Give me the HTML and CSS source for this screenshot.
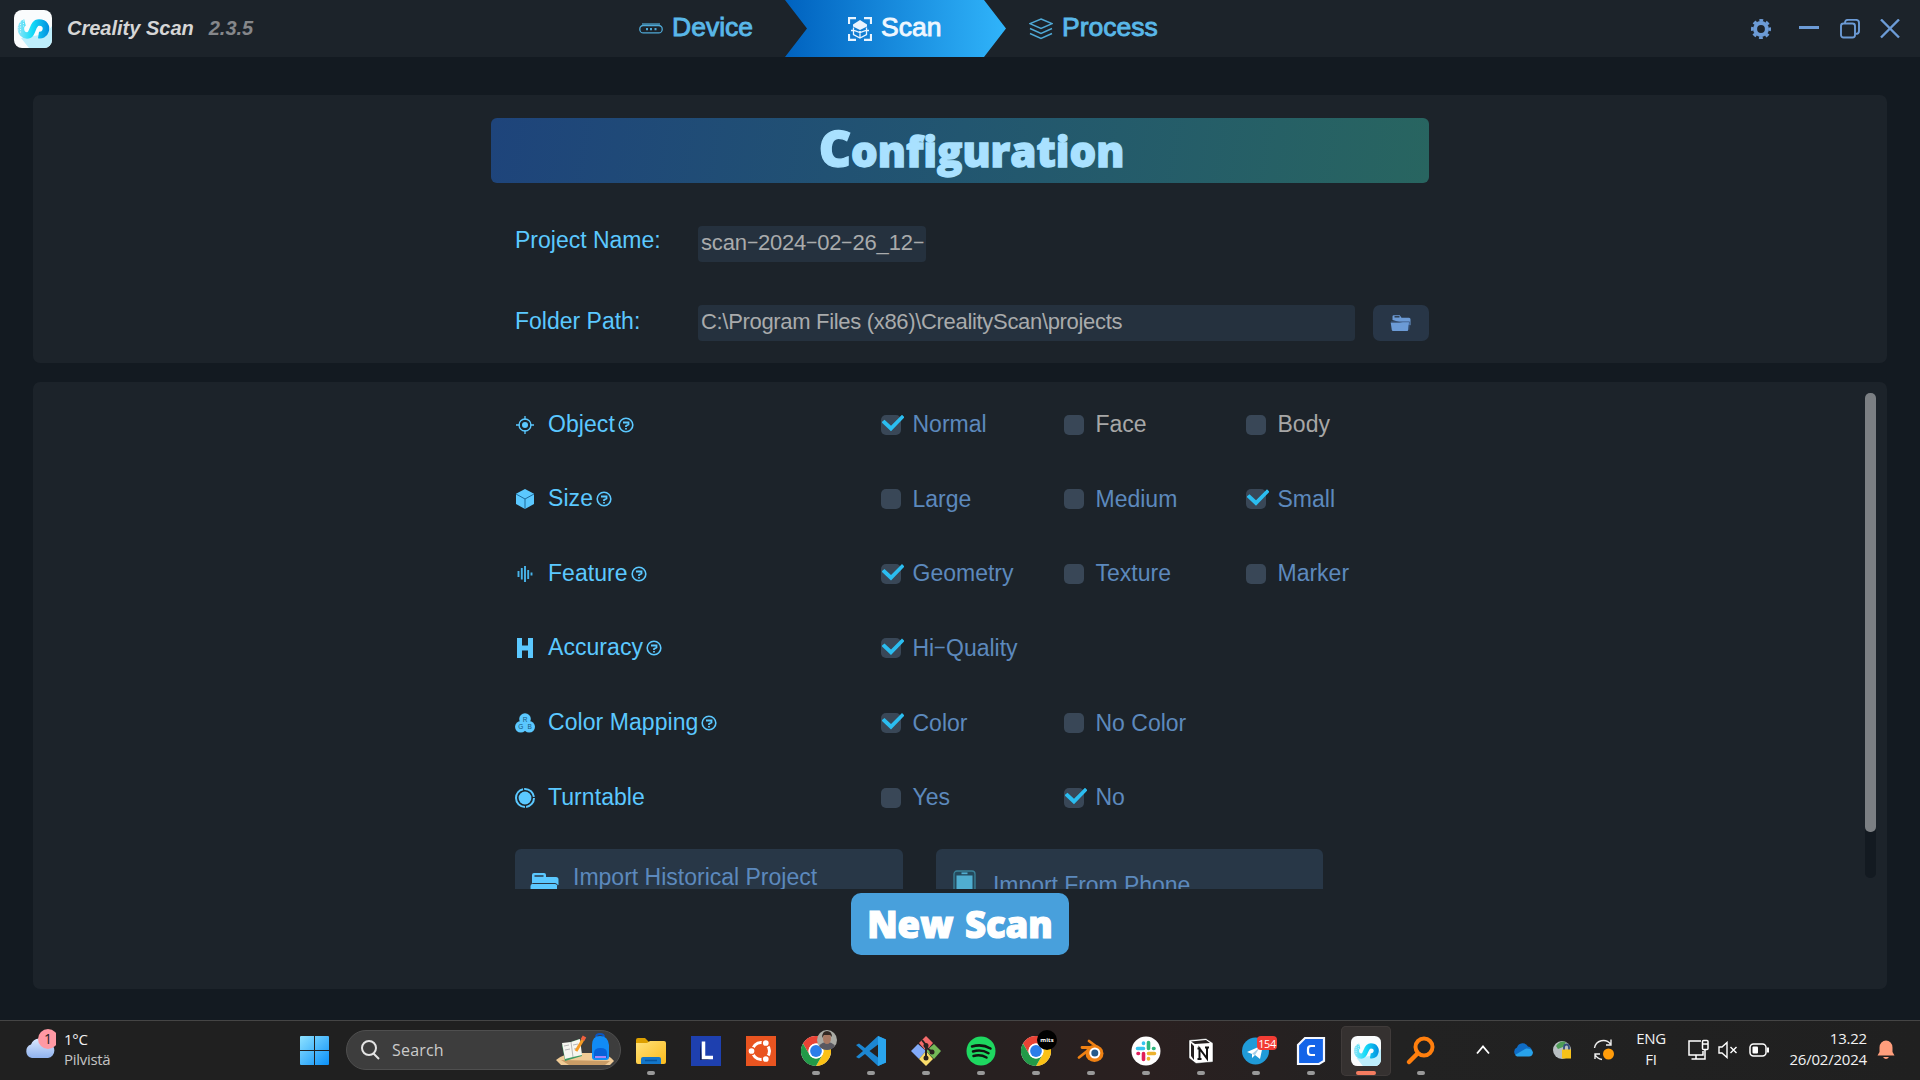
FILE: index.html
```
<!DOCTYPE html>
<html lang="en">
<head>
<meta charset="utf-8">
<title>Creality Scan</title>
<link rel="stylesheet" href="styles.css">
</head>
<body>
<svg class="defs" width="0" height="0">
  <defs>
    <linearGradient id="cr" gradientUnits="userSpaceOnUse" x1="4" y1="18" x2="35" y2="18"><stop offset="0" stop-color="#8fe4f7"/><stop offset=".45" stop-color="#16dcf8"/><stop offset="1" stop-color="#0090e0"/></linearGradient>
    <linearGradient id="win" x1="0" y1="0" x2="1" y2="1"><stop offset="0" stop-color="#8ee2ff"/><stop offset="1" stop-color="#0a90f8"/></linearGradient>
    <linearGradient id="fold" x1="0" y1="0" x2="1" y2="1"><stop offset="0" stop-color="#ffe27a"/><stop offset="1" stop-color="#fbbb1c"/></linearGradient>
    <linearGradient id="cloud" x1="0" y1="0" x2="0" y2="1"><stop offset="0" stop-color="#dbe9ff"/><stop offset="1" stop-color="#8fb2ee"/></linearGradient>
    <symbol id="logo" viewBox="0 0 38 38">
      <rect width="38" height="38" rx="8" fill="#fafcfd"/>
      <path d="M7 28 15 38H30a8 8 0 0 0 8-8V16L32 24z" fill="#bdeefc"/>
      <path d="M11 12.500C5 14 5.500 25.500 13 25.500C20 25.500 17.500 12.500 25 12.500C31 12.500 33 17 31.500 21C30.500 24.500 27.500 25.500 24.500 25" fill="none" stroke="url(#cr)" stroke-width="6.500"/>
      <path d="M4 12v10M6.500 9v14M9.500 8v9M12.500 9v5" stroke="#fafcfd" stroke-width=".8" stroke-dasharray="1 1.500"/>
    </symbol>
    <symbol id="help" viewBox="0 0 16 16"><circle cx="8" cy="8" r="6.800" fill="none" stroke="#5bc8ff" stroke-width="1.600"/><path d="M5 5.500h5.500v2L8 9v1M8 11v1.500" fill="none" stroke="#5bc8ff" stroke-width="1.800"/></symbol>
    <symbol id="chrome" viewBox="0 0 30 30">
      <circle cx="15" cy="15" r="15" fill="#fff"/>
      <path d="M2 7.500A15 15 0 0 1 28 7.500H15a7.500 7.500 0 0 0-6.500 11.200z" fill="#ea4335"/>
      <path d="M28 7.500A15 15 0 0 1 15 30l6.500-11.300A7.500 7.500 0 0 0 15 7.500z" fill="#fbc116"/>
      <path d="M2 7.500A15 15 0 0 0 15 30l6.500-11.300a7.500 7.500 0 0 1-13 0z" fill="#229a48"/>
      <circle cx="15" cy="15" r="7.500" fill="#fff"/><circle cx="15" cy="15" r="5.900" fill="#2b7de9"/>
    </symbol>
  </defs>
</svg>

<header class="titlebar">
  <div class="brand">
    <svg width="38" height="38"><use href="#logo"/></svg>
    <span class="brand-name">Creality Scan</span>
    <span class="brand-version">2.3.5</span>
  </div>
  <nav class="steps">
    <a class="step device">
      <svg width="24" height="24" viewBox="0 0 24 24" fill="none" stroke="#4fa9d6" stroke-width="1.300"><rect x=".8" y="8.500" width="22.400" height="7.400" rx="3.500"/><path d="M3 7h18" stroke-width="1.200"/><path d="M7 12.200h2M11 12.200h2M15.500 12.200h2" stroke-width="2.200"/></svg>
      <span>Device</span>
    </a>
    <a class="step scan">
      <svg width="24" height="24" viewBox="0 0 24 24" fill="none" stroke="#e8f4ff" stroke-width="2.200"><path d="M1 7V1.100h7M16 1.100h7V7M23 17v5.900h-7M8 22.900H1V17"/><path d="M12 3 19 7.500v2L12 13 5 9.500v-2z" fill="#e8f4ff" stroke="none"/><path d="M3 13.500h3l6 2 6-2h3M5.500 10.500v7L12 21l6.500-3.500v-7M12 14v7" stroke-width="1.300"/></svg>
      <span>Scan</span>
    </a>
    <a class="step process">
      <svg width="24" height="24" viewBox="0 0 24 24" fill="none" stroke="#4fa9d6" stroke-width="1.400"><path d="M12 2 23 6.700 12 11.500 1 6.700zM1 11.500l11 5 11-5M1 16.500l11 5 11-5"/></svg>
      <span>Process</span>
    </a>
  </nav>
  <div class="controls">
    <svg width="20" height="20" viewBox="0 0 20 20"><circle cx="10" cy="10" r="5.900" fill="none" stroke="#6c9bd6" stroke-width="4"/><circle cx="10" cy="10" r="8.700" fill="none" stroke="#6c9bd6" stroke-width="2.600" stroke-dasharray="3.800 3.033" stroke-dashoffset="1.900"/></svg>
    <svg width="20" height="20" viewBox="0 0 20 20"><path d="M0 8.500h20" stroke="#6c9bd6" stroke-width="3"/></svg>
    <svg width="20" height="20" viewBox="0 0 20 20" fill="none" stroke="#6c9bd6" stroke-width="1.900"><rect x="1" y="4.500" width="14" height="14" rx="2.500"/><path d="M5 4C5 1.800 6 .9 8 .9h8c2 0 3 1 3 3v8c0 2-1 3-3.500 3"/></svg>
    <svg width="20" height="20" viewBox="0 0 20 20"><path d="M1 .5l18 18M19 .5 1 18.500" stroke="#6c9bd6" stroke-width="2.400"/></svg>
  </div>
</header>

<main class="workspace">
  <section class="panel project">
    <div class="project-form">
      <h1 class="banner"><span class="initial">C</span>onfiguration</h1>
      <div class="field name-field">
        <label>Project Name:</label>
        <div class="input short">scan<i>-</i>2024<i>-</i>02<i>-</i>26_12<i>-</i></div>
      </div>
      <div class="field path-field">
        <label>Folder Path:</label>
        <div class="input path">C:\Program Files (x86)\CrealityScan\projects</div>
        <button class="browse"><svg width="22" height="18" viewBox="0 0 22 18"><path d="M2.500 6V2.500q0-1.300 1.300-1.300h6l1.700 2.500h7.500q1.500 0 1.500 1.500v6" fill="#6c9bd6"/><path d="M4.500 2.800h5" stroke="#283647" stroke-width="1.400"/><path d="M.7 8.500H19L18.200 16q-.1 1-1 1H3q-1 0-1.200-1z" fill="#6c9bd6"/><path d="M1 7.800h18.500l-.6 8" stroke="#3b5983" fill="none" stroke-width=".8"/></svg></button>
      </div>
    </div>
  </section>

  <section class="panel options">
    <div class="scroll">
      <div class="option-form">
        <div class="row">
          <div class="label"><svg width="20" height="20" viewBox="0 0 20 20"><circle cx="10" cy="10" r="6" fill="none" stroke="#5bc8ff" stroke-width="1.300"/><circle cx="10" cy="10" r="3" fill="#5bc8ff"/><path d="M10 1v4M10 15v4M1 10h4M15 10h4" stroke="#5bc8ff" stroke-width="1.300"/></svg><span>Object</span><svg class="help"><use href="#help"/></svg></div>
          <div class="choice on"><b></b>Normal</div><div class="choice gray"><b></b>Face</div><div class="choice gray"><b></b>Body</div>
        </div>
        <div class="row">
          <div class="label"><svg width="20" height="20" viewBox="0 0 20 20"><path d="M10 0 19 4.800V15L10 20 1 15V4.800z" fill="#5bc8ff"/><path d="M1 5l9 5 9-5M10 10v10" stroke="#1c6a9c" fill="none"/></svg><span>Size</span><svg class="help"><use href="#help"/></svg></div>
          <div class="choice"><b></b>Large</div><div class="choice"><b></b>Medium</div><div class="choice on"><b></b>Small</div>
        </div>
        <div class="row">
          <div class="label"><svg width="20" height="20" viewBox="0 0 20 20"><path d="M3.500 7v6M6.800 4v11.500M10 2v16M13.200 6v9M16.500 8.500v3" stroke="#48b4ea" stroke-width="1.900"/></svg><span>Feature</span><svg class="help"><use href="#help"/></svg></div>
          <div class="choice on"><b></b>Geometry</div><div class="choice"><b></b>Texture</div><div class="choice"><b></b>Marker</div>
        </div>
        <div class="row">
          <div class="label"><svg width="20" height="20" viewBox="0 0 20 20"><path d="M4.500 0v20M15.500 0v20M4 10h12" stroke="#5bc8ff" stroke-width="5"/></svg><span>Accuracy</span><svg class="help"><use href="#help"/></svg></div>
          <div class="choice on"><b></b><span>Hi<i>-</i>Quality</span></div>
        </div>
        <div class="row">
          <div class="label"><svg width="20" height="20" viewBox="0 0 20 20"><g fill="#5bc8ff"><circle cx="10" cy="6" r="5.800"/><circle cx="5.800" cy="13.800" r="5.800"/><circle cx="14.200" cy="13.800" r="5.800"/></g><g class="rgb"><text x="7.800" y="8.500">R</text><text x="3.200" y="16">G</text><text x="12.400" y="16">B</text></g></svg><span>Color Mapping</span><svg class="help"><use href="#help"/></svg></div>
          <div class="choice on"><b></b>Color</div><div class="choice"><b></b>No Color</div>
        </div>
        <div class="row">
          <div class="label"><svg width="20" height="20" viewBox="0 0 20 20"><circle cx="10" cy="10" r="6.400" fill="#5bc8ff"/><circle cx="10" cy="10" r="9" fill="none" stroke="#5bc8ff" stroke-width="2" stroke-dasharray="12.900 1.200 26 1.200 13.800 1.400"/></svg><span>Turntable</span></div>
          <div class="choice"><b></b>Yes</div><div class="choice on"><b></b>No</div>
        </div>
        <div class="imports">
          <button class="import history"><svg width="30" height="28" viewBox="0 0 30 28"><path d="M2 10V2q0-2 2-2h10q2 0 2 2v2h10q2.500 0 2.500 2.500V12H2z" fill="#5bc8ff"/><path d="M4.500 3h9" stroke="#283747" stroke-width="1.500"/><path d="M0 13q0-2.500 2.500-2.500H25q2 0 2.500 2V26H0z" fill="#5bc8ff" stroke="#283747"/></svg><span>Import Historical Project</span></button>
          <button class="import phone"><svg width="23" height="38" viewBox="0 0 23 38"><rect x="1" y="1" width="21" height="36" rx="3" fill="#24495c" stroke="#3a8299" stroke-width="1.300"/><path d="M8.500 3.300h6" stroke="#50aed0" stroke-width="1.800"/><rect x="3.500" y="5.500" width="16" height="26" fill="#50aed0"/></svg><span>Import From Phone</span></button>
        </div>
      </div>
      <div class="scrollbar"><div class="thumb"></div></div>
    </div>
    <button class="new-scan">New Scan</button>
  </section>
</main>

<footer class="taskbar">
  <div class="weather">
    <svg width="32" height="34" viewBox="0 0 32 34"><path d="M8 32a7 7 0 0 1-1-13.500A9.500 9.500 0 0 1 24 17a7.600 7.600 0 0 1 0 15z" fill="url(#cloud)"/><circle cx="24" cy="13" r="10" fill="#ff99a4"/><text x="24" y="18" text-anchor="middle" class="badge-text">1</text></svg>
    <div class="weather-text"><span>1°C</span><span>Pilvistä</span></div>
  </div>
  <svg class="start" width="29" height="29" viewBox="0 0 29 29" fill="url(#win)"><path d="M1 0h13v14H0V1q0-1 1-1zM15 0h13q1 0 1 1v13H15zM0 15h14v14H1q-1 0-1-1zM15 15h14v13q0 1-1 1H15z"/></svg>
  <div class="search">
    <svg width="19" height="20" viewBox="0 0 19 20" fill="none" stroke="#e4e4e4" stroke-width="2"><circle cx="8" cy="8" r="7"/><path d="M12.500 13.500 18 19"/></svg>
    <span>Search</span>
    <svg class="art" width="58" height="34" viewBox="0 0 58 34"><path d="M0 27q8-7 22-7h20q9 0 16 8l-4 4H5z" fill="#f0cb96"/><path d="m5 27 8 5h36l5-4" fill="#c99c66"/><path d="M6 12 23 6l3 17-17 5z" fill="#3f9a63"/><path d="m6 10 9-1 9-3 2 16-9 2-8 2z" fill="#f6f6f0"/><path d="M15 9l2 15M8 13l5-1M9 17l5-1M17 12l5-1M18 16l5-1" stroke="#b8b8b8"/><path d="m20 18 8-13" stroke="#f59b25" stroke-width="3"/><path d="m26.500 7 2-3.500" stroke="#f0603f" stroke-width="4"/><path d="M40 4q0-3 4-3t4 3" fill="none" stroke="#0c55c0" stroke-width="2"/><path d="M36 12q0-9 8-9t9 9v12q0 3-3 3H39q-3 0-3-3z" fill="#118bf5"/><path d="M38 20q0-5 6.500-5t6.500 5v5H38z" fill="#0761d8"/><path d="M39 24h11" stroke="#a884f5" stroke-width="2"/></svg>
  </div>
  <div class="apps">
    <div class="app"><svg viewBox="0 0 30 30"><path d="M0 4q0-2 2-2h7l4 4v3H0z" fill="#dda000"/><path d="M0 7h11l3-2h14q2 0 2 2v19q0 2-2 2H2q-2 0-2-2z" fill="url(#fold)"/><path d="M5 28v-5q0-2 2-2h16q2 0 2 2v5z" fill="#1376c9"/><path d="M9 24.500h12" stroke="#07549c" stroke-width="1.500"/></svg></div>
    <div class="app idle"><svg viewBox="0 0 30 30"><path d="M0 0h30v30H0z" fill="#1e40af"/><path d="M9 6v18h10l-8-3z" fill="#0a1c5a"/><path d="M12.500 5.500v16H22" fill="none" stroke="#fff" stroke-width="3.500"/></svg></div>
    <div class="app idle"><svg viewBox="0 0 30 30"><path d="M0 0h30v30H0z" fill="#e95420"/><circle cx="15" cy="15" r="8.500" fill="none" stroke="#fff" stroke-width="3"/><g fill="#fff" stroke="#e95420" stroke-width="1.500"><circle cx="5.500" cy="15" r="3.600"/><circle cx="19.800" cy="7" r="3.600"/><circle cx="19.800" cy="23" r="3.600"/></g></svg></div>
    <div class="app"><svg viewBox="0 0 30 30"><use href="#chrome" width="30" height="30"/></svg><svg class="avatar" viewBox="0 0 20 20"><circle cx="10" cy="10" r="10" fill="#a9aaa4"/><path d="M2 16q3-4 8-4t8 4q-3 4-8 4t-8-4z" fill="#595860"/><ellipse cx="10" cy="8.500" rx="4" ry="5.500" fill="#a87862"/><path d="M5 8q0-7 5-7t5 6l-2-2H7z" fill="#332823"/></svg></div>
    <div class="app"><svg viewBox="0 0 30 30"><path d="M22 0 30 3.500v23L22 30 9 18l-6 4.500L0 21l7-6L0 9l3-1.500L9 12z" fill="#1c86d1"/><path d="M22 0 30 3.500v23L22 30z" fill="#2aa5ee"/><path d="M22 8.500v13L13.500 15z" fill="#252120"/></svg></div>
    <div class="app"><svg viewBox="0 0 30 30"><path d="m15 0 7 7-7 8-7-8z" fill="#f56b6b"/><path d="m7 8 8 7-7 8-8-8z" fill="#82aaf8"/><path d="m23 8 7 7-7 8-8-8z" fill="#74b957"/><path d="m15 15 7 8-7 7-7-7z" fill="#f9dc6b"/><path d="M11 4l4 5v14M15 11l6 5" stroke="#2a211f" stroke-width="2" fill="none"/><g fill="#2a211f"><circle cx="15" cy="9.500" r="2.500"/><circle cx="21" cy="16" r="2.500"/><circle cx="15" cy="22" r="2.500"/></g></svg></div>
    <div class="app"><svg viewBox="0 0 30 30"><circle cx="15" cy="15" r="14.500" fill="#1ed760"/><path d="M6 10.500q10-3 18.500 2M7 15.500q8.500-2.500 15.500 1.700M7.500 20q7-2 13 1.500" stroke="#101410" fill="none" stroke-linecap="round" stroke-width="2.500"/></svg></div>
    <div class="app"><svg viewBox="0 0 30 30"><use href="#chrome" width="30" height="30"/></svg><svg class="avatar" viewBox="0 0 20 20"><circle cx="10" cy="10" r="10"/><text x="10" y="12" text-anchor="middle" class="mits">mits</text></svg></div>
    <div class="app"><svg viewBox="0 0 30 30"><path d="M6 11.500h10M3 21.500 15 12M13 5l12 9" stroke="#ef8113" stroke-width="2.800" fill="none" stroke-linecap="round"/><ellipse cx="18.500" cy="17.500" rx="9" ry="8.500" fill="#ef8113"/><circle cx="18.800" cy="17" r="5.500" fill="#fff"/><circle cx="18.800" cy="17" r="3.500" fill="#255a8c"/></svg></div>
    <div class="app"><svg viewBox="0 0 30 30"><circle cx="15" cy="15" r="14.500" fill="#fff"/><g stroke-width="3.600" stroke-linecap="round"><path d="M12.500 7v.5M6.500 12.500h6" stroke="#36c5f0"/><path d="M17.500 6.500v6M23 12.500h-.5" stroke="#2eb67d"/><path d="M17.500 17.500h6M17.500 23v-.5" stroke="#ecb22e"/><path d="M12.500 17.500v6M7 17.500h.5" stroke="#e01e5a"/></g></svg></div>
    <div class="app"><svg viewBox="0 0 30 30"><path d="m3 4 17-1.500L27 7v19l-17 1.500L3 22z" fill="#fff" stroke="#111" stroke-width=".5"/><path d="M5 5.500 20 4l4 3-15 1zM5 7l3 3v14l-3-4z" fill="#242020"/><path d="M9.500 10 25 9v15.500L9.500 26z" fill="#fff"/><path d="M13.500 23V12.500l7.500 10V11M11.500 12.500h3M19 11.500h4M11.500 23h4" stroke="#111" stroke-width="2" fill="none"/></svg></div>
    <div class="app"><svg viewBox="0 0 30 30"><circle cx="14.500" cy="15" r="13.500" fill="#209bd8"/><path d="m6 16 16-7-3 14-5-4-3 3v-4z" fill="#fff"/><path d="m11 18 8-7-5 8" fill="#a6cfe7"/><rect x="16" y="0" width="20" height="14" rx="4" fill="#f23c34"/><text x="26" y="11.500" text-anchor="middle" class="count">154</text></svg></div>
    <div class="app"><svg viewBox="0 0 30 30"><path d="M9 2h19v23l-5 3H2V9z" fill="#1464e8" stroke="#f4f7ff" stroke-width="2.200"/><path d="M19 10h-4q-3 0-3 3v3q0 3 3 3h4" stroke="#fff" stroke-width="2.200" fill="none"/></svg></div>
    <div class="app active"><svg viewBox="0 0 38 38"><use href="#logo" width="38" height="38"/></svg></div>
    <div class="app"><svg viewBox="0 0 30 30"><circle cx="18" cy="11" r="8.500" fill="none" stroke="#ff7f0e" stroke-width="4"/><path d="M11.500 17.500 3 26" stroke="#ff7f0e" stroke-width="4.500" stroke-linecap="round"/></svg></div>
  </div>
  <div class="tray">
    <svg class="chev" width="14" height="10" viewBox="0 0 14 10"><path d="m1 8.500 6-7 6 7" fill="none" stroke="#fff" stroke-width="1.800"/></svg>
    <svg class="cloud" width="20" height="14" viewBox="0 0 20 14"><path d="M4.500 13a4.500 4.500 0 0 1-.5-8.500 6 6 0 0 1 11-1A5 5 0 0 1 16 13z" fill="#0f6cc5"/><path d="M2 12 13 5.500q6-.5 7 4-.5 4-4 4H4z" fill="#28a2ea"/></svg>
    <svg class="lock" width="20" height="20" viewBox="0 0 20 20"><circle cx="9" cy="10" r="9" fill="#b8bfc2"/><path d="M3 6q4-6 10-4l-3 5-5 2z" fill="#4d9c56"/><path d="M11 10V7.500q0-3 2.500-3t2.500 3V10" fill="none" stroke="#334d7a" stroke-width="1.800"/><rect x="9" y="9.500" width="9" height="9" fill="#f7c21a"/></svg>
    <svg class="sync" width="22" height="22" viewBox="0 0 22 22"><path d="M1.500 9a9 9 0 0 1 16-4M18 .5V6h-5M2 20v-5h5M2 15.500q2 4 7 5" fill="none" stroke="#eee" stroke-width="1.400"/><circle cx="15.500" cy="15" r="5.500" fill="#ff9c0a"/></svg>
    <div class="lang"><span>ENG</span><span>FI</span></div>
    <svg class="net" width="21" height="22" viewBox="0 0 21 22" fill="none" stroke="#fff" stroke-width="1.500"><path d="M13 2H1v14h14v-4M8 16v4M3.500 20H17v-9"/><rect x="14.500" y="1.500" width="5.500" height="9" rx="1"/><path d="M15 5h5"/></svg>
    <svg class="vol" width="20" height="18" viewBox="0 0 20 18" fill="none" stroke="#fff" stroke-width="1.400"><path d="M1 6h3l5-4.500v15L4 12H1zM12.500 6l6 6M18.500 6l-6 6"/></svg>
    <svg class="batt" width="21" height="14" viewBox="0 0 21 14"><rect x="1" y="1" width="16" height="12" rx="3.500" fill="none" stroke="#fff" stroke-width="1.500"/><rect x="3.500" y="3.500" width="5.500" height="7" rx="1" fill="#fff"/><path d="M19 4.500v5" stroke="#fff" stroke-width="2"/></svg>
    <div class="clock"><span>13.22</span><span>26/02/2024</span></div>
    <svg class="bell" width="18" height="20" viewBox="0 0 18 20" fill="#ff9e7c"><path d="M2.500 7.500a6.500 7 0 0 1 13 0V12l2 3.500H.5l2-3.500zM6 17h6q-3 4-6 0z"/></svg>
  </div>
</footer>
</body>
</html>
```

FILE: styles.css
```
* { box-sizing: border-box; }
body {
  margin: 0;
  width: 1920px;
  height: 1080px;
  overflow: hidden;
  display: flex;
  flex-direction: column;
  background: #131a21;
  font-family: "Liberation Sans", Arial, sans-serif;
}
svg { display: block; flex: none; }
.defs { position: absolute; }
button { border: 0; padding: 0; font: inherit; }

/* title bar */
.titlebar { display: flex; height: 57px; background: #1c232a; }
.brand { display: flex; align-items: center; width: 639px; padding-left: 14px; font: italic bold 20px "Liberation Sans", Arial, sans-serif; }
.brand-name { margin-left: 15px; color: #d6d6d6; }
.brand-version { margin-left: 15px; color: #85878a; }
.steps { display: flex; flex: 1; }
.step { display: flex; align-items: center; gap: 9px; font-size: 26.500px; color: #59b7e8; -webkit-text-stroke: .9px currentColor; }
.step span { margin-top: -2px; }
.device { width: 146px; }
.scan { width: 221px; padding-left: 63px; color: #eef7ff; background: linear-gradient(90deg, #0062bf, #1a8fe0 55%, #30b4fa); clip-path: polygon(0 0, 199px 0, 100% 50%, 199px 100%, 0 100%, 22px 50%); }
.process { padding-left: 23px; }
.controls { display: grid; grid-template-columns: 48px 41px 40px 20px; align-items: center; padding-right: 20px; }
.controls svg:first-child { margin-top: 1px; }

/* panels */
.workspace { height: 963px; padding: 38px 33px 31px; display: flex; flex-direction: column; gap: 19px; }
.panel { background: #1c232a; border-radius: 7px; }
.project { height: 268px; padding-top: 23px; }
.project-form { width: 938px; margin-left: 458px; }
.banner {
  display: flex; align-items: baseline; justify-content: center;
  height: 65px; margin: 0; padding-left: 23px; border-radius: 6px;
  background: linear-gradient(100deg, #1e447b, #225670 50%, #286560);
  color: #a9e1ff; font: 800 42px/60px "Open Sans", "Noto Sans", sans-serif;
  -webkit-text-stroke: 1.300px currentColor;
}
.initial { font-size: 50px; }
.field { display: flex; align-items: center; padding-left: 24px; font-size: 23px; color: #5bc8ff; }
.field label { width: 183px; }
.name-field { margin-top: 43px; }
.name-field label { margin-top: -7px; }
.path-field { margin-top: 43px; }
.path-field label { margin-top: -3px; }
.input { height: 36px; line-height: 34px; padding-left: 3px; border-radius: 4px; background: #25313e; color: #a9abac; font-size: 22px; white-space: nowrap; }
.short { width: 228px; letter-spacing: -.17px; }
.path { width: 657px; line-height: 33px; letter-spacing: -.320px; }
i { display: inline-block; font-style: normal; margin: 0 .09em; transform: translateY(-1px) scale(1.75, .8); }
.browse { display: flex; align-items: center; justify-content: center; width: 56px; height: 36px; margin-left: 18px; border-radius: 7px; background: #283647; }

.options { height: 607px; }
.scroll { display: flex; justify-content: space-between; height: 507px; overflow: hidden; }
.option-form { width: 910px; padding-top: 5.400px; margin-left: 482px; }
.row { display: grid; grid-template-columns: 366px 183px 182px 182px; align-items: center; height: 74.600px; font-size: 23px; color: #5c89bd; }
.label { display: flex; align-items: center; color: #5bc8ff; }
.label span { margin-left: 13px; margin-top: -1px; letter-spacing: .06px; }
.help { width: 16px; height: 16px; margin-left: 3px; }
.rgb { font-size: 6.500px; fill: #17577c; }
.choice { display: flex; align-items: center; gap: 11.500px; line-height: 26px; white-space: nowrap; height: 22px; padding-bottom: 1px; }
.choice b { width: 20px; height: 20px; margin-top: 1px; border-radius: 5px; background: #394757; }
.on b::after { content: ""; display: block; width: 23px; height: 18px; background: #2bbdf0; clip-path: polygon(1px 7px, 3.500px 5px, 10px 11px, 21px 0, 23.500px 2.500px, 10px 16.500px, 1px 8px); }
.choice.gray { color: #a7a7a7; }
.imports { display: flex; gap: 33px; margin-top: 14px; }
.import { display: flex; align-items: flex-start; width: 388px; height: 70px; border-radius: 6px; background: #283747; color: #5c89bd; font-size: 23px; white-space: nowrap; }
.history { padding: 24px 0 0 15px; }
.history span { margin: -9px 0 0 13px; }
.phone { width: 387px; padding: 21px 0 0 17px; }
.phone span { margin: 2px 0 0 17px; letter-spacing: -.05px; }
.scrollbar { width: 11px; height: 485px; margin: 11px 11px 0 0; border-radius: 5px; background: #131a21; }
.thumb { height: 439px; border-radius: 5px; background: #7b7f83; }
.new-scan { display: block; width: 218px; height: 62px; margin: 4px auto 0; border-radius: 10px; background: #48a0dc; color: #fff; font: 800 36.500px/62px "Open Sans", "Noto Sans", sans-serif; word-spacing: 2px; -webkit-text-stroke: 1.200px currentColor; }

/* taskbar */
.taskbar { display: flex; align-items: center; height: 60px; border-top: 1px solid #454545; background: linear-gradient(90deg, #202020 0, #202020 620px, #2a2020 1150px, #222 1400px, #202020); color: #f2f2f2; font: 15px "Open Sans", "Noto Sans", sans-serif; }
.weather { display: flex; width: 300px; padding-left: 24px; }
.weather svg { margin-top: -6px; }
.weather-text, .lang, .clock { display: flex; flex-direction: column; line-height: 20px; letter-spacing: -.6px; margin-top: -3px; }
.weather-text { margin-left: 8px; letter-spacing: -.3px; }
.weather-text span + span { color: #c4c4c4; }
.badge-text { font-size: 14px; fill: #222; }
.search { display: flex; align-items: center; width: 275px; height: 40px; margin: -1px 0 0 17px; padding: 0 6px 0 14px; border: 1px solid #4f4f4f; border-radius: 20px; background: #3d3d3d; color: #cbcbcb; font-size: 16px; }
.search span { margin-left: 12px; letter-spacing: .2px; }
.art { margin-left: auto; }
.apps { display: grid; grid-template-columns: repeat(15, 55px); margin-left: 2px; }
.app { position: relative; display: flex; justify-content: center; align-items: center; width: 50px; height: 50px; margin: 0 auto; border-radius: 5px; }
.app > svg { width: 30px; height: 30px; overflow: visible; }
.app > .avatar { position: absolute; right: 4px; top: 4px; width: 20px; height: 20px; }
.app::after { content: ""; position: absolute; bottom: 1px; left: 21px; width: 8px; height: 4px; border-radius: 2px; background: #999; }
.idle::after { display: none; }
.active { background: #353130; box-shadow: inset 0 0 0 1px #403b3a; }
.app.active::after { left: 15px; width: 20px; background: #f47c60; }
.mits { fill: #fff; font: bold 6px "Open Sans", sans-serif; }
.count { fill: #fff; font-size: 11px; letter-spacing: -.4px; }
.tray { display: flex; align-items: center; margin: -2px 0 0 28px; }
.cloud { margin-left: 23px; }
.lock { margin-left: 20px; }
.sync { margin-left: 20px; }
.lang { width: 40px; margin-left: 16px; align-items: center; letter-spacing: -.3px; }
.lang span + span, .clock span + span { margin-top: 1px; }
.net { margin-left: 17px; }
.vol { margin-left: 9px; }
.batt { margin-left: 11px; }
.clock { width: 97px; align-items: flex-end; letter-spacing: -.2px; }
.bell { margin-left: 10px; }
```
